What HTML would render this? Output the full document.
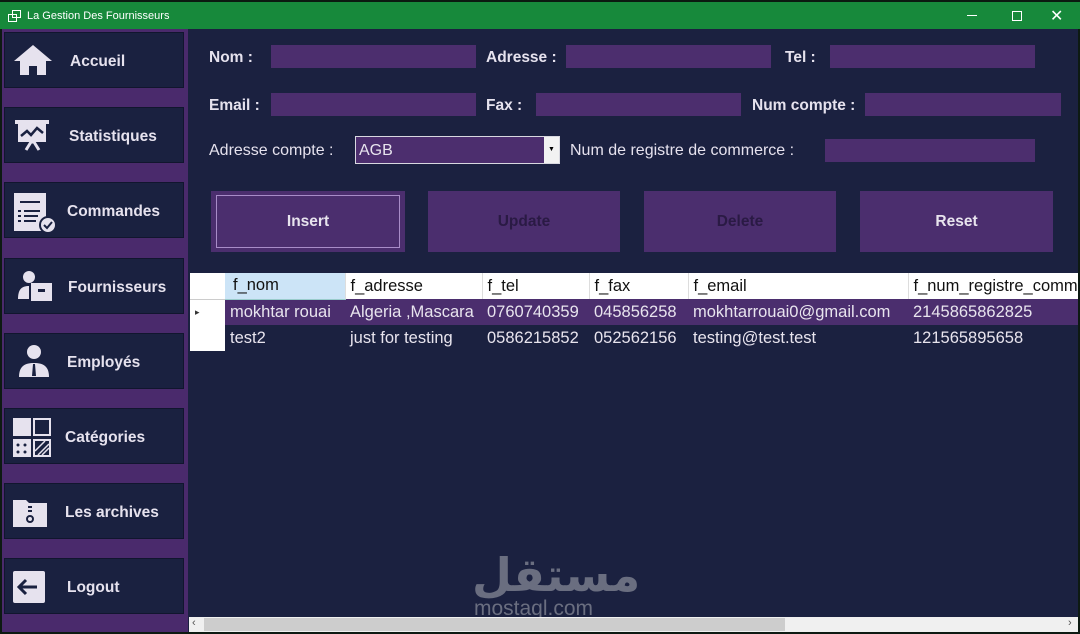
<!DOCTYPE html>
<html><head><meta charset="utf-8"><style>
*{margin:0;padding:0;box-sizing:border-box}
body{width:1080px;height:634px;overflow:hidden;background:#0d1a12;font-family:"Liberation Sans",sans-serif;position:relative;color:#e8e4ee}
.a{position:absolute}
.title{left:0;top:0;width:1080px;height:29px;background:#17893b;border-top:2px solid #0b1a10}
.title span{position:absolute;left:27px;top:8px;font-size:11px;color:#fff}
.side{left:2px;top:29px;width:186px;height:603px;background:#4a2a6c}
.nb{left:4px;width:180px;height:56px;background:#1a2140;border:1px solid #11162e}
.nb span{position:absolute;left:62px;top:20px;font-size:15.5px;font-weight:bold;color:#e6e2ee}
.nb svg{position:absolute;left:7px;top:8px}
.main{left:188px;top:29px;width:890px;height:603px;background:#1b2140}
.lbl{font-size:15.5px;font-weight:bold;color:#e6e2ee}
.in{background:#4c2e6e;height:23px}
.btn{background:#4b2e6e;height:61px;font-size:15.5px;font-weight:bold;text-align:center;line-height:61px}
td{height:26px;font-size:16.5px;padding-left:5px;white-space:nowrap;overflow:hidden}
</style></head><body>
<div class="a title"><svg class="a" style="left:8px;top:8px" width="14" height="13"><rect x="0.5" y="4.5" width="8" height="7" fill="none" stroke="#fff"/><rect x="4.5" y="0.5" width="8" height="7" fill="none" stroke="#fff"/></svg><span>La Gestion Des Fournisseurs</span>
<div class="a" style="left:967px;top:13px;width:10px;height:1px;background:#fff"></div>
<div class="a" style="left:1012px;top:9px;width:10px;height:10px;border:1px solid #fff"></div>
<div class="a" style="left:1050px;top:4px;color:#fff;font-size:16px">✕</div></div>
<div class="a side"></div>
<div class="a nb" style="top:32px"><svg width="42" height="40"><path d="M21 4 L2 20 H8 V34 H17 V25 H25 V34 H34 V20 H40 Z" fill="#e6e2ee"/></svg><span style="left:65px">Accueil</span></div>
<div class="a nb" style="top:107px"><svg width="42" height="40"><rect x="3" y="4" width="34" height="4" fill="#e6e2ee"/><rect x="6" y="8" width="28" height="18" fill="#e6e2ee"/><path d="M9 20 L15 15 L19 19 L25 12 L31 17" stroke="#1a2140" stroke-width="2.5" fill="none"/><path d="M14 34 L19 26 H22 L27 34" stroke="#e6e2ee" stroke-width="3" fill="none"/></svg><span style="left:64px">Statistiques</span></div>
<div class="a nb" style="top:182px"><svg width="46" height="44"><rect x="2" y="2" width="32" height="38" fill="#e6e2ee"/><g stroke="#1a2140" stroke-width="2"><line x1="8" y1="11" x2="28" y2="11"/><line x1="6" y1="20" x2="9" y2="20"/><line x1="12" y1="20" x2="28" y2="20"/><line x1="6" y1="25" x2="9" y2="25"/><line x1="12" y1="25" x2="26" y2="25"/><line x1="6" y1="30" x2="9" y2="30"/><line x1="12" y1="30" x2="24" y2="30"/></g><circle cx="36" cy="34" r="8" fill="#e6e2ee" stroke="#1a2140" stroke-width="2"/><path d="M32 34 L35 37 L40 31" stroke="#1a2140" stroke-width="2" fill="none"/></svg><span>Commandes</span></div>
<div class="a nb" style="top:258px"><svg width="46" height="42"><circle cx="17" cy="10" r="6" fill="#e6e2ee"/><path d="M6 32 C6 22 10 19 17 19 L17 32 Z" fill="#e6e2ee"/><rect x="19" y="16" width="21" height="18" fill="#e6e2ee"/><rect x="26" y="22" width="7" height="3" fill="#1a2140"/></svg><span style="left:63px">Fournisseurs</span></div>
<div class="a nb" style="top:333px"><svg width="46" height="42"><circle cx="22" cy="10" r="7" fill="#e6e2ee"/><path d="M7 35 C7 24 13 21 22 21 C31 21 37 24 37 35 Z" fill="#e6e2ee"/><path d="M21 22 H23 L24 34 H20 Z" fill="#1a2140"/></svg><span>Employés</span></div>
<div class="a nb" style="top:408px"><svg width="46" height="44"><rect x="1" y="1" width="18" height="18" fill="#e6e2ee"/><rect x="22" y="2" width="16" height="16" fill="none" stroke="#e6e2ee" stroke-width="2"/><rect x="1" y="22" width="18" height="18" fill="#e6e2ee"/><g fill="#1a2140"><circle cx="6" cy="28" r="1.5"/><circle cx="13" cy="28" r="1.5"/><circle cx="6" cy="35" r="1.5"/><circle cx="13" cy="35" r="1.5"/></g><rect x="22" y="23" width="16" height="16" fill="none" stroke="#e6e2ee" stroke-width="2"/><path d="M23 34 L33 24 M26 38 L37 27 M30 38 L37 31" stroke="#e6e2ee" stroke-width="1.5"/></svg><span style="left:60px">Catégories</span></div>
<div class="a nb" style="top:483px"><svg width="46" height="42"><path d="M1 8 H14 L17 11 H35 V35 H1 Z" fill="#e6e2ee"/><rect x="16" y="14" width="4" height="2" fill="#1a2140"/><rect x="16" y="18" width="4" height="2" fill="#1a2140"/><circle cx="18" cy="27" r="3" fill="none" stroke="#1a2140" stroke-width="2"/></svg><span style="left:60px">Les archives</span></div>
<div class="a nb" style="top:558px"><svg width="46" height="42"><rect x="1" y="4" width="32" height="32" rx="2" fill="#e6e2ee"/><path d="M8 20 H25 M14 13 L7 20 L14 27" stroke="#1a2140" stroke-width="3" fill="none"/></svg><span>Logout</span></div>
<div class="a main"></div>
<div class="a lbl" style="left:209px;top:49px">Nom :</div><div class="a in" style="left:271px;top:45px;width:205px"></div>
<div class="a lbl" style="left:486px;top:49px">Adresse :</div><div class="a in" style="left:566px;top:45px;width:205px"></div>
<div class="a lbl" style="left:785px;top:49px">Tel :</div><div class="a in" style="left:830px;top:45px;width:205px"></div>
<div class="a lbl" style="left:209px;top:97px">Email :</div><div class="a in" style="left:271px;top:93px;width:205px"></div>
<div class="a lbl" style="left:486px;top:97px">Fax :</div><div class="a in" style="left:536px;top:93px;width:205px"></div>
<div class="a lbl" style="left:752px;top:97px">Num compte :</div><div class="a in" style="left:865px;top:93px;width:196px"></div>
<div class="a lbl" style="left:209px;top:142px;font-weight:normal;font-size:16px">Adresse compte :</div>
<div class="a" style="left:355px;top:136px;width:205px;height:28px;border:1px solid #d8d8e0;background:#4c2e6e"><span style="position:absolute;left:3px;top:5px;font-size:16px">AGB</span><div style="position:absolute;right:0;top:0;width:15px;height:26px;background:#f2f2f2;font-size:7px;color:#000;text-align:center;line-height:26px">▼</div></div>
<div class="a lbl" style="left:570px;top:142px;font-weight:normal;font-size:16px">Num de registre de commerce :</div><div class="a in" style="left:825px;top:139px;width:210px"></div>
<div class="a btn" style="left:211px;top:191px;width:194px"><div style="position:absolute;left:5px;top:4px;right:5px;bottom:4px;border:1px solid #a88cc8;line-height:51px;font-weight:bold">Insert</div></div>
<div class="a btn" style="left:428px;top:191px;width:192px;color:#2a1a44">Update</div>
<div class="a btn" style="left:644px;top:191px;width:192px;color:#2a1a44">Delete</div>
<div class="a btn" style="left:860px;top:191px;width:193px">Reset</div>
<div class="a" style="left:190px;top:273px;width:888px;height:79px;overflow:hidden">
<table style="border-collapse:collapse;table-layout:fixed;width:900px">
<colgroup><col style="width:35px"><col style="width:120px"><col style="width:137px"><col style="width:107px"><col style="width:99px"><col style="width:220px"><col style="width:182px"></colgroup>
<tr style="background:#fff;color:#111"><td style="border-bottom:1px solid #ccc"></td><td style="background:#cce4f7;border-bottom:1px solid #9cc;padding-left:8px">f_nom</td><td style="border-left:1px solid #ddd">f_adresse</td><td style="border-left:1px solid #ddd">f_tel</td><td style="border-left:1px solid #ddd">f_fax</td><td style="border-left:1px solid #ddd">f_email</td><td style="border-left:1px solid #ddd">f_num_registre_commerce</td></tr>
<tr style="background:#4b2e6e;color:#e8e4ee"><td style="background:#fff;color:#333;font-size:9px">▸</td><td>mokhtar rouai</td><td>Algeria ,Mascara</td><td>0760740359</td><td>045856258</td><td>mokhtarrouai0@gmail.com</td><td>2145865862825</td></tr>
<tr style="background:#1b2140;color:#e8e4ee"><td style="background:#fff"></td><td>test2</td><td>just for testing</td><td>0586215852</td><td>052562156</td><td>testing@test.test</td><td>121565895658</td></tr>
</table></div>
<div class="a" style="left:472px;top:548px;font-size:46px;font-weight:bold;color:#6a6e80;font-family:'DejaVu Sans',sans-serif">مستقل</div>
<div class="a" style="left:474px;top:597px;font-size:21px;color:#6a6e80">mostaql.com</div>
<div class="a" style="left:189px;top:617px;width:889px;height:15px;background:#f0f0f0"></div>
<div class="a" style="left:204px;top:618px;width:581px;height:13px;background:#cdcdcd"></div>
<div class="a" style="left:192px;top:617px;font-size:11px;color:#555">‹</div>
<div class="a" style="left:1068px;top:617px;font-size:11px;color:#555">›</div>
</body></html>
